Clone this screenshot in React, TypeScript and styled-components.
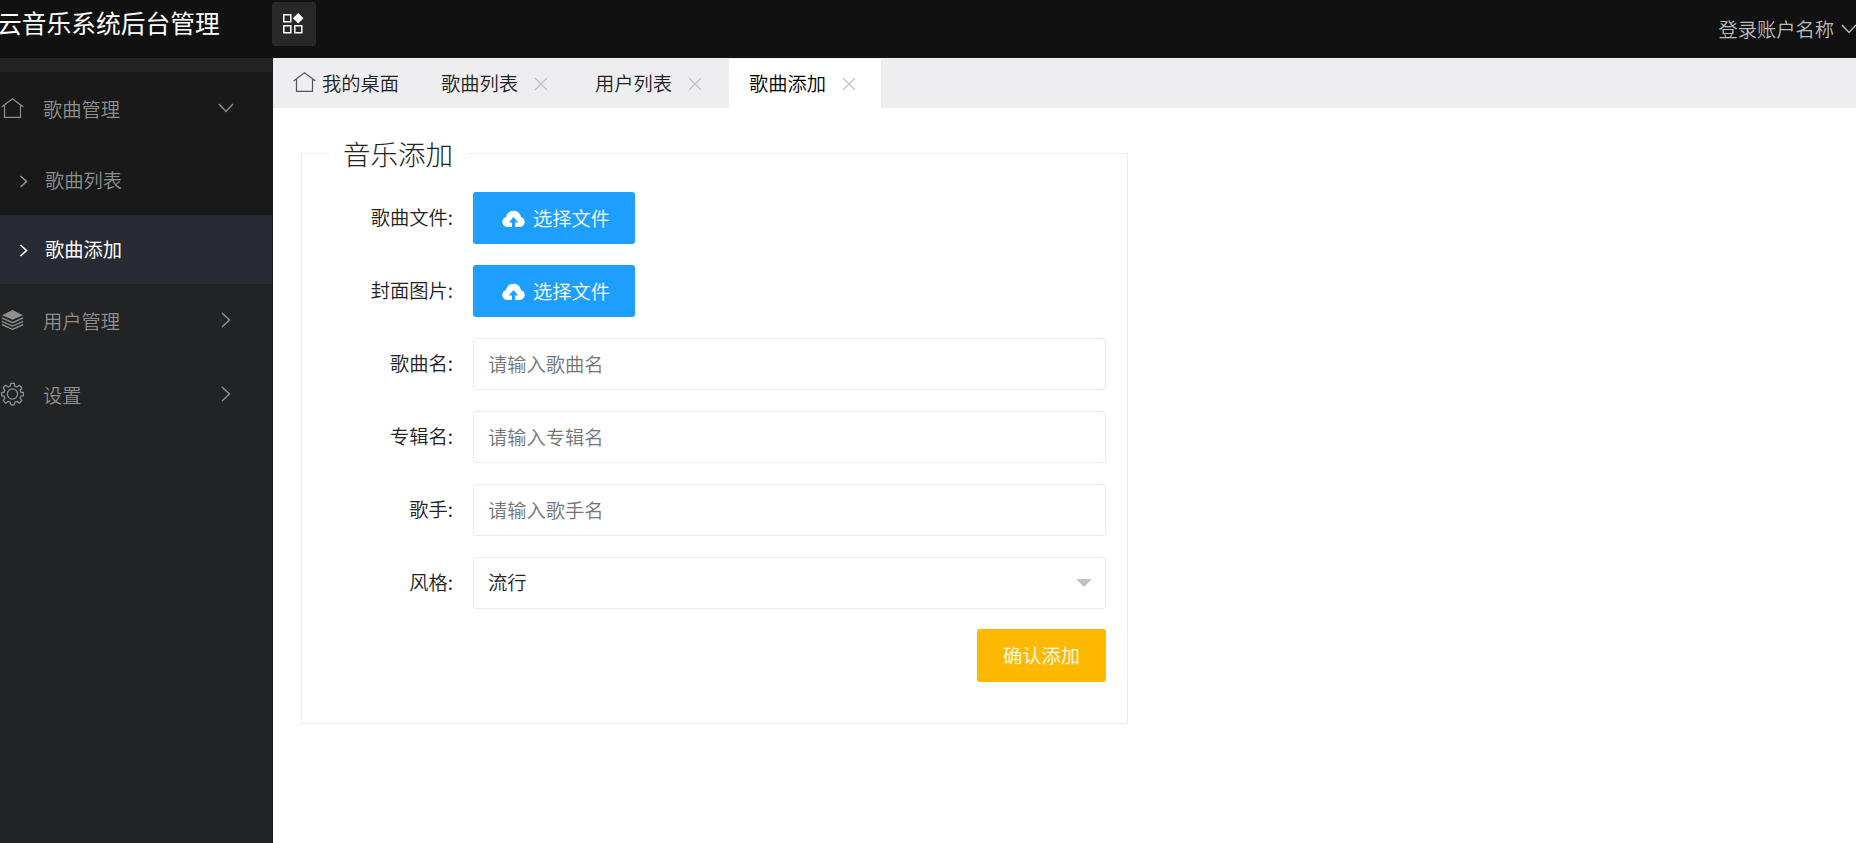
import React from "react";
import styled, { createGlobalStyle } from "styled-components";

const GlobalStyle = createGlobalStyle`
  *, *::before, *::after { box-sizing: border-box; }
  body {
    margin: 0;
    background: #fff;
    color: #222;
    overflow: hidden;
    font: 350 19.25px/1 "Noto Sans CJK SC", sans-serif;
  }
  button, input { font: inherit; }
`;

const Page = styled.div`
  display: flex;
  flex-direction: column;
  height: 843px;
`;

const Header = styled.header`
  display: flex;
  align-items: flex-start;
  flex: none;
  height: 58px;
  background: #111;
`;

const Title = styled.h1`
  flex: none;
  width: 275px;
  margin: 0 0 0 -3px;
  font-size: 24.75px;
  font-weight: 400;
  line-height: 45px;
  white-space: nowrap;
  color: #fff;
`;

const MenuButton = styled.button`
  display: flex;
  align-items: center;
  justify-content: center;
  width: 44px;
  height: 44px;
  margin: 2px 0 0;
  padding: 0 2px 0 0;
  border: 0;
  border-radius: 3px;
  background: #282828;
  color: #fff;
`;

const Account = styled.div`
  display: flex;
  flex: none;
  gap: 7px;
  margin: 0 -1px 0 auto;
  line-height: 58px;
  color: #bbb;
  svg { margin: 21px 0 0; }
`;

const Body = styled.div`
  display: flex;
  flex: 1;
  min-height: 0;
`;

const Sidebar = styled.nav`
  flex: none;
  width: 273px;
  padding-top: 14px;
  border-right: 1px solid #1a1a1a;
  background: #222324;
`;

const MenuGroup = styled.div<{ $open?: boolean }>`
  background: ${(p) => (p.$open ? "#191919" : "transparent")};
`;

const MenuItem = styled.a`
  display: flex;
  align-items: center;
  height: 74px;
  padding: 0 38px 2px 1px;
  color: #8f8f8f;
`;

const MenuLabel = styled.span`
  flex: 1;
  margin-left: 19px;
  padding-top: 3px;
`;

const SubItem = styled.a<{ $active?: boolean }>`
  display: flex;
  align-items: center;
  gap: 16px;
  height: 69px;
  padding-left: 19px;
  background: ${(p) => (p.$active ? "#282b33" : "transparent")};
  color: ${(p) => (p.$active ? "#fff" : "#8f8f8f")};
  font-weight: ${(p) => (p.$active ? 400 : 350)};
`;

const Content = styled.main`
  flex: 1;
  min-width: 0;
`;

const TabBar = styled.div`
  display: flex;
  height: 50px;
  background: #eeeef0;
  border-top: 1px solid #f3f3f3;
`;

const Tab = styled.div<{ $active?: boolean; $home?: boolean }>`
  display: flex;
  align-items: center;
  width: ${(p) => (p.$home ? "148px" : p.$active ? "152px" : "154px")};
  padding-left: 20px;
  gap: ${(p) => (p.$home ? "6px" : "16px")};
  background: ${(p) => (p.$active ? "#fff" : "transparent")};
  color: ${(p) => (p.$active ? "#000" : "#222")};
  white-space: nowrap;
`;

const TabIcon = styled.span`
  display: flex;
  padding-bottom: 4px;
  color: #555;
`;

const FormBox = styled.fieldset`
  width: 827px;
  height: 591px;
  margin: 25px 0 0 28px;
  padding: 19px 21px 0 0;
  border: 1px solid #ebebeb;
`;

const Legend = styled.legend`
  height: 40px;
  margin-left: 27px;
  padding: 0 14px;
  font-size: 27.5px;
  font-weight: 300;
  line-height: 40px;
`;

const Row = styled.div`
  display: flex;
  height: 52px;
  margin-bottom: 21px;
`;

const Label = styled.label`
  width: 151px;
  margin-right: 20px;
  text-align: right;
  line-height: 51px;
`;

const UploadButton = styled.button`
  display: flex;
  align-items: center;
  gap: 8px;
  width: 162px;
  padding: 1px 0 0 29px;
  border: 0;
  border-radius: 3px;
  background: #1e9fff;
  color: #fff;
  white-space: nowrap;
`;

const TextInput = styled.input`
  flex: 1;
  min-width: 0;
  padding: 0 14px;
  border: 1px solid #ebebeb;
  border-radius: 3px;
  outline: 0;
  background: #fff;
  &::placeholder { color: #757575; opacity: 1; }
`;

const SelectBox = styled.div`
  display: flex;
  flex: 1;
  align-items: center;
  justify-content: space-between;
  padding: 0 13px 0 14px;
  border: 1px solid #ebebeb;
  border-radius: 3px;
`;

const Caret = styled.i`
  border: 8px solid transparent;
  border-top-color: #c2c2c2;
  border-bottom: 0;
  margin-top: -1px;
`;

const Actions = styled.div`
  display: flex;
  justify-content: flex-end;
  margin-top: -1px;
`;

const SubmitButton = styled.button`
  width: 129px;
  height: 53px;
  padding: 0;
  border: 0;
  border-radius: 3px;
  background: #ffb800;
  color: #fff;
`;

const HomeIcon = () => (
  <svg width="23" height="22" viewBox="0 0 23 22" fill="none" stroke="currentColor" strokeWidth="1.2">
    <path d="M.6 10 11.5 1.8 22.4 10M3.5 8.5v11.9h16V8.5" />
  </svg>
);

const LayersIcon = () => (
  <svg width="23" height="22" viewBox="0 0 23 22" fill="none" stroke="currentColor" strokeWidth="1.4">
    <path d="M11.5 1 22 6.2 11.5 10.8 1 6.2Z" fill="currentColor" stroke="none" />
    <path d="m.8 8.9 10.7 4.8 10.7-4.8M.8 12.3l10.7 4.8 10.7-4.8M.8 15.5l10.7 4.8 10.7-4.8" />
  </svg>
);

const GearIcon = () => (
  <svg width="23" height="24" viewBox="0 0 23 24" fill="none" stroke="currentColor" strokeWidth="1.3" strokeLinejoin="round">
    <circle cx="11.5" cy="12" r="5.1" />
    <path d="M9.7 1.3h3.6l.5 2.9 2 .8 2.5-1.7 2.5 2.5-1.7 2.5.8 2 2.5.2v3.3l-2.5.4-.8 2 1.7 2.4-2.5 2.6-2.5-1.8-2 .8-.5 2.6H9.7l-.5-2.6-2-.8-2.5 1.8-2.5-2.6 1.7-2.4-.8-2-2.5-.4v-3.3l2.5-.2.8-2-1.7-2.5 2.5-2.5L7.2 5l2-.8Z" />
  </svg>
);

const Chevron = ({ down, small }: { down?: boolean; small?: boolean }) =>
  down ? (
    <svg width="16" height="16" viewBox="0 0 16 16" fill="none" stroke="currentColor" strokeWidth="1.5">
      <path d="m1 4 7 7.5L15 4" />
    </svg>
  ) : (
    <svg width={small ? 10 : 16} height={small ? 14 : 16} viewBox={small ? "0 0 10 14" : "0 0 16 16"} fill="none" stroke="currentColor" strokeWidth={small ? 1.6 : 1.5}>
      <path d={small ? "m1.5 2 6 5.5-6 5.5" : "m4 1 7.5 7L4 15"} />
    </svg>
  );

const CloseIcon = () => (
  <svg width="14" height="14" viewBox="0 0 14 14" fill="none" stroke="#c2c2c2" strokeWidth="1.3">
    <path d="m1 1 12 12M13 1 1 13" />
  </svg>
);

const GridIcon = () => (
  <svg width="22" height="22" viewBox="0 0 22 22" fill="none" stroke="currentColor" strokeWidth="1.5">
    <path d="M1.8 1.8h7v7h-7zM1.8 12.8h7v7h-7zM12.8 12.8h7v7h-7z" />
    <path d="m16.2 0 5.3 5.3-5.3 5.3-5.3-5.3Z" fill="currentColor" stroke="none" />
  </svg>
);

const CloudIcon = () => (
  <svg width="23" height="18" viewBox="0 0 23 18" fill="currentColor">
    <path d="M6 17C2.5 17 .3 14.8.3 12c0-2.5 1.5-4.3 3.8-4.9C4.6 3.3 7.6.8 11.5.8s6.9 2.5 7.4 6.3c2.3.6 3.8 2.4 3.8 4.9 0 2.8-2.2 5-5.7 5h-4v-4.6h3.2L11.5 7l-4.7 5.4H10V17Z" />
  </svg>
);

const textFields = [
  { label: "歌曲名:", placeholder: "请输入歌曲名" },
  { label: "专辑名:", placeholder: "请输入专辑名" },
  { label: "歌手:", placeholder: "请输入歌手名" },
];

export default function App() {
  return (
    <Page>
      <GlobalStyle />
      <Header>
        <Title>云音乐系统后台管理</Title>
        <MenuButton><GridIcon /></MenuButton>
        <Account>登录账户名称<Chevron down /></Account>
      </Header>
      <Body>
        <Sidebar>
          <MenuGroup $open>
            <MenuItem><HomeIcon /><MenuLabel>歌曲管理</MenuLabel><Chevron down /></MenuItem>
            <SubItem><Chevron small />歌曲列表</SubItem>
            <SubItem $active><Chevron small />歌曲添加</SubItem>
          </MenuGroup>
          <MenuGroup>
            <MenuItem><LayersIcon /><MenuLabel>用户管理</MenuLabel><Chevron /></MenuItem>
            <MenuItem><GearIcon /><MenuLabel>设置</MenuLabel><Chevron /></MenuItem>
          </MenuGroup>
        </Sidebar>
        <Content>
          <TabBar>
            <Tab $home><TabIcon><HomeIcon /></TabIcon>我的桌面</Tab>
            <Tab>歌曲列表<CloseIcon /></Tab>
            <Tab>用户列表<CloseIcon /></Tab>
            <Tab $active>歌曲添加<CloseIcon /></Tab>
          </TabBar>
          <FormBox>
            <Legend>音乐添加</Legend>
            {["歌曲文件:", "封面图片:"].map((label) => (
              <Row key={label}>
                <Label>{label}</Label>
                <UploadButton type="button"><CloudIcon />选择文件</UploadButton>
              </Row>
            ))}
            {textFields.map((field) => (
              <Row key={field.label}>
                <Label>{field.label}</Label>
                <TextInput placeholder={field.placeholder} />
              </Row>
            ))}
            <Row>
              <Label>风格:</Label>
              <SelectBox>流行<Caret /></SelectBox>
            </Row>
            <Actions><SubmitButton type="button">确认添加</SubmitButton></Actions>
          </FormBox>
        </Content>
      </Body>
    </Page>
  );
}
